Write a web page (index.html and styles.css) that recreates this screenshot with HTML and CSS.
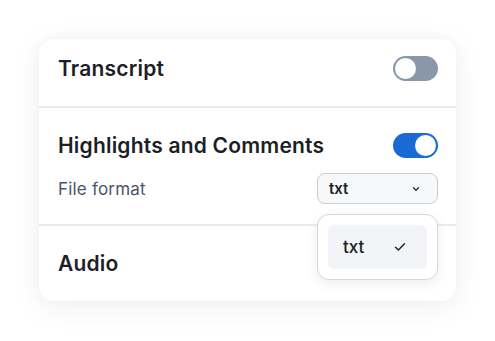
FILE: index.html
```html
<!DOCTYPE html>
<html>
<head>
<meta charset="utf-8">
<link rel="stylesheet" href="styles.css">
</head>
<body>
<div class="stage">
  <div class="card">
    <div class="section section-first">
      <div class="row-inline">
        <span class="title">Transcript</span>
        <span class="toggle"><span class="knob"></span></span>
      </div>
    </div>
    <div class="divider"></div>
    <div class="section section-mid">
      <div class="row-inline">
        <span class="title">Highlights and Comments</span>
        <span class="toggle on"><span class="knob"></span></span>
      </div>
      <div class="row-inline format-row">
        <span class="label">File format</span>
        <div class="select-wrap">
          <div class="select">
            <span class="select-value">txt</span>
            <svg class="chev" width="8" height="6" viewBox="0 0 8 6"><path d="M1.5 1.8 L4 4.2 L6.5 1.8" fill="none" stroke="#1f2430" stroke-width="1.3" stroke-linecap="round" stroke-linejoin="round"/></svg>
          </div>
          <div class="menu">
            <div class="menu-item">
              <span class="menu-text">txt</span>
              <svg class="check" width="12" height="10" viewBox="0 0 12 10"><path d="M1.5 5.2 L4.4 8 L10.5 1.8" fill="none" stroke="#1f2430" stroke-width="1.5" stroke-linecap="round" stroke-linejoin="round"/></svg>
            </div>
          </div>
        </div>
      </div>
    </div>
    <div class="divider"></div>
    <div class="section section-last">
      <div class="row-inline">
        <span class="title">Audio</span>
      </div>
    </div>
  </div>
</div>
</body>
</html>
```
FILE: styles.css
```css
* { box-sizing: border-box; }
html, body { margin: 0; padding: 0; background: #ffffff; }
body { width: 495px; height: 341px; overflow: hidden; font-family: "Inter", "Noto Sans", sans-serif; }
.stage { padding: 39px 39px 0 39px; }
.card {
  width: 417px;
  height: 262px;
  background: #ffffff;
  border-radius: 14px;
  box-shadow: 0 6px 30px rgba(30, 40, 60, 0.07), 0 0 12px rgba(30, 40, 60, 0.03);
  display: flex;
  flex-direction: column;
}
.section { padding-left: 19px; padding-right: 18px; }
.section-first { padding-top: 17px; padding-bottom: 25px; }
.section-mid { padding-top: 25px; padding-bottom: 20px; }
.section-last { padding-top: 25px; }
.divider { height: 2px; background: #e8ebf0; }
.row-inline {
  display: flex;
  align-items: center;
  justify-content: space-between;
  height: 25px;
}
.format-row { margin-top: 15px; height: 31px; }
.title {
  font-size: 21px;
  font-weight: 600;
  color: #1c1f26;
  line-height: 25px;
  letter-spacing: 0.2px;
}
.label {
  font-size: 17px;
  color: #4b5568;
  font-weight: 400;
  letter-spacing: 0.2px;
}
.toggle {
  width: 45px;
  height: 25px;
  border-radius: 13px;
  background: #8a97ab;
  padding: 2px;
  display: flex;
  justify-content: flex-start;
}
.toggle.on { background: #1a6ad6; justify-content: flex-end; }
.knob {
  width: 21px;
  height: 21px;
  border-radius: 50%;
  background: #ffffff;
}
.select-wrap { position: relative; }
.select {
  width: 121px;
  height: 31px;
  border: 1px solid #c9cdd7;
  border-radius: 8px;
  background: #f7f8fa;
  display: flex;
  align-items: center;
  justify-content: space-between;
  padding: 0 17px 0 11px;
}
.select-value { font-size: 15px; font-weight: 600; color: #1c1f26; }
.chev { display: block; }
.menu {
  position: absolute;
  left: 0;
  top: 41px;
  width: 121px;
  height: 66px;
  background: #ffffff;
  border: 1px solid #d3d7e0;
  border-radius: 12px;
  box-shadow: 0 4px 12px rgba(30, 40, 60, 0.08);
  padding: 10px;
  z-index: 2;
}
.menu-item {
  width: 99px;
  height: 44px;
  border-radius: 6px;
  background: #f3f4f7;
  display: flex;
  align-items: center;
  padding: 0 0 0 15px;
}
.menu-text { font-size: 17px; font-weight: 500; color: #1c1f26; width: 51px; }
.check { display: block; }
```
